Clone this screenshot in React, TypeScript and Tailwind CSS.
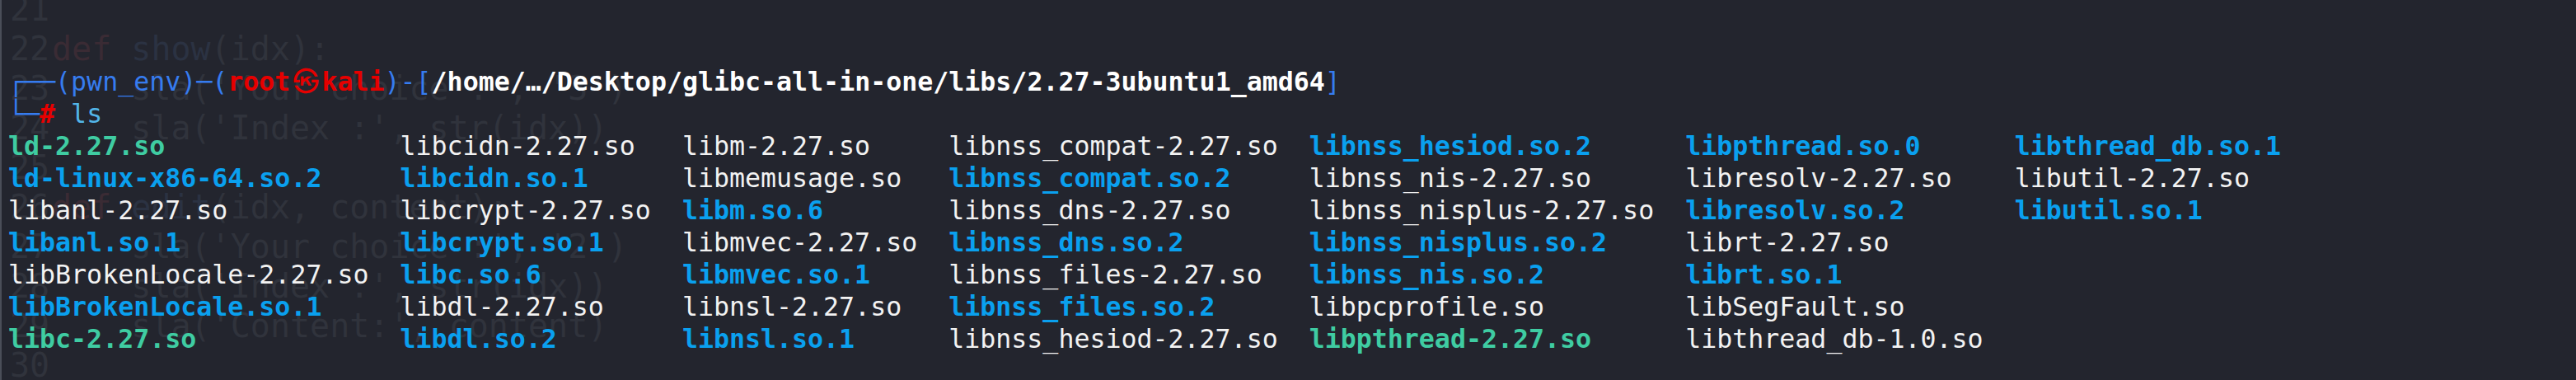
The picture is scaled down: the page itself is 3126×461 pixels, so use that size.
import React from "react";

type Kind = "file" | "link" | "exec";

const files: [string, Kind][] = [
  ["ld-2.27.so", "exec"],
  ["ld-linux-x86-64.so.2", "link"],
  ["libanl-2.27.so", "file"],
  ["libanl.so.1", "link"],
  ["libBrokenLocale-2.27.so", "file"],
  ["libBrokenLocale.so.1", "link"],
  ["libc-2.27.so", "exec"],
  ["libcidn-2.27.so", "file"],
  ["libcidn.so.1", "link"],
  ["libcrypt-2.27.so", "file"],
  ["libcrypt.so.1", "link"],
  ["libc.so.6", "link"],
  ["libdl-2.27.so", "file"],
  ["libdl.so.2", "link"],
  ["libm-2.27.so", "file"],
  ["libmemusage.so", "file"],
  ["libm.so.6", "link"],
  ["libmvec-2.27.so", "file"],
  ["libmvec.so.1", "link"],
  ["libnsl-2.27.so", "file"],
  ["libnsl.so.1", "link"],
  ["libnss_compat-2.27.so", "file"],
  ["libnss_compat.so.2", "link"],
  ["libnss_dns-2.27.so", "file"],
  ["libnss_dns.so.2", "link"],
  ["libnss_files-2.27.so", "file"],
  ["libnss_files.so.2", "link"],
  ["libnss_hesiod-2.27.so", "file"],
  ["libnss_hesiod.so.2", "link"],
  ["libnss_nis-2.27.so", "file"],
  ["libnss_nisplus-2.27.so", "file"],
  ["libnss_nisplus.so.2", "link"],
  ["libnss_nis.so.2", "link"],
  ["libpcprofile.so", "file"],
  ["libpthread-2.27.so", "exec"],
  ["libpthread.so.0", "link"],
  ["libresolv-2.27.so", "file"],
  ["libresolv.so.2", "link"],
  ["librt-2.27.so", "file"],
  ["librt.so.1", "link"],
  ["libSegFault.so", "file"],
  ["libthread_db-1.0.so", "file"],
  ["libthread_db.so.1", "link"],
  ["libutil-2.27.so", "file"],
  ["libutil.so.1", "link"],
];

const kindClass: Record<Kind, string> = {
  file: "text-[#f2f2f2]",
  link: "text-[#0aa0ef] font-bold",
  exec: "text-[#3fcca2] font-bold",
};

// faint editor text showing through the transparent terminal
const ghost: { n: string; parts: [string, string][] }[] = [
  { n: "21", parts: [] },
  { n: "22", parts: [["def", "text-[#3a2b34]"], [" ", ""], ["show", "text-[#2b3242]"], ["(idx):", ""]] },
  { n: "23", parts: [["    sla('Your choice :', '3')", ""]] },
  { n: "24", parts: [["    sla('Index :', str(idx))", ""]] },
  { n: "25", parts: [] },
  { n: "26", parts: [["def", "text-[#3a2b34]"], [" ", ""], ["edit", "text-[#2b3242]"], ["(idx, content):", ""]] },
  { n: "27", parts: [["    sla('Your choice :', '2')", ""]] },
  { n: "28", parts: [["    sla('Index :', str(idx))", ""]] },
  { n: "29", parts: [["    sla('Content:', content)", ""]] },
  { n: "30", parts: [] },
];

const mono = "font-['DejaVu_Sans_Mono','Noto_Sans_CJK_KR',monospace]";

export default function App() {
  return (
    <div className={`relative h-[461px] w-full overflow-hidden bg-[#23252e] border-l-2 border-[#4a4e58] ${mono}`}>
      <div className="absolute inset-0 pl-[10px] -mt-[13px] text-[40px] leading-[48px] text-[#30333c] whitespace-pre select-none">
        {ghost.map((g) => (
          <div key={g.n} className="flex">
            <span className="w-[51px]">{g.n}</span>
            {g.parts.map(([t, c], i) => (
              <span key={i} className={c}>{t}</span>
            ))}
          </div>
        ))}
      </div>

      <div className="relative pl-[8px] pt-[80px] text-[31.6px] leading-[39px] whitespace-pre">
        <div>
          <span className="text-[#367cf0]">┌──(pwn_env)─(</span>
          <span className="text-[#e60000] font-bold">root</span>
          <span className="inline-block w-[2ch] text-center text-[#e60000] font-bold">㉿</span>
          <span className="text-[#e60000] font-bold">kali</span>
          <span className="text-[#367cf0]">)-[</span>
          <span className="text-white font-bold">/home/…/Desktop/glibc-all-in-one/libs/2.27-3ubuntu1_amd64</span>
          <span className="text-[#367cf0]">]</span>
        </div>
        <div>
          <span className="text-[#367cf0]">└─</span>
          <span className="text-[#e60000] font-bold">#</span>
          <span> </span>
          <span className="text-[#52b5e8]">ls</span>
        </div>
        <div className="grid grid-flow-col grid-rows-[repeat(7,39px)] grid-cols-[25ch_18ch_17ch_23ch_24ch_21ch_auto] justify-start">
          {files.map(([name, kind]) => (
            <span key={name} className={kindClass[kind]}>{name}</span>
          ))}
        </div>
      </div>
    </div>
  );
}
